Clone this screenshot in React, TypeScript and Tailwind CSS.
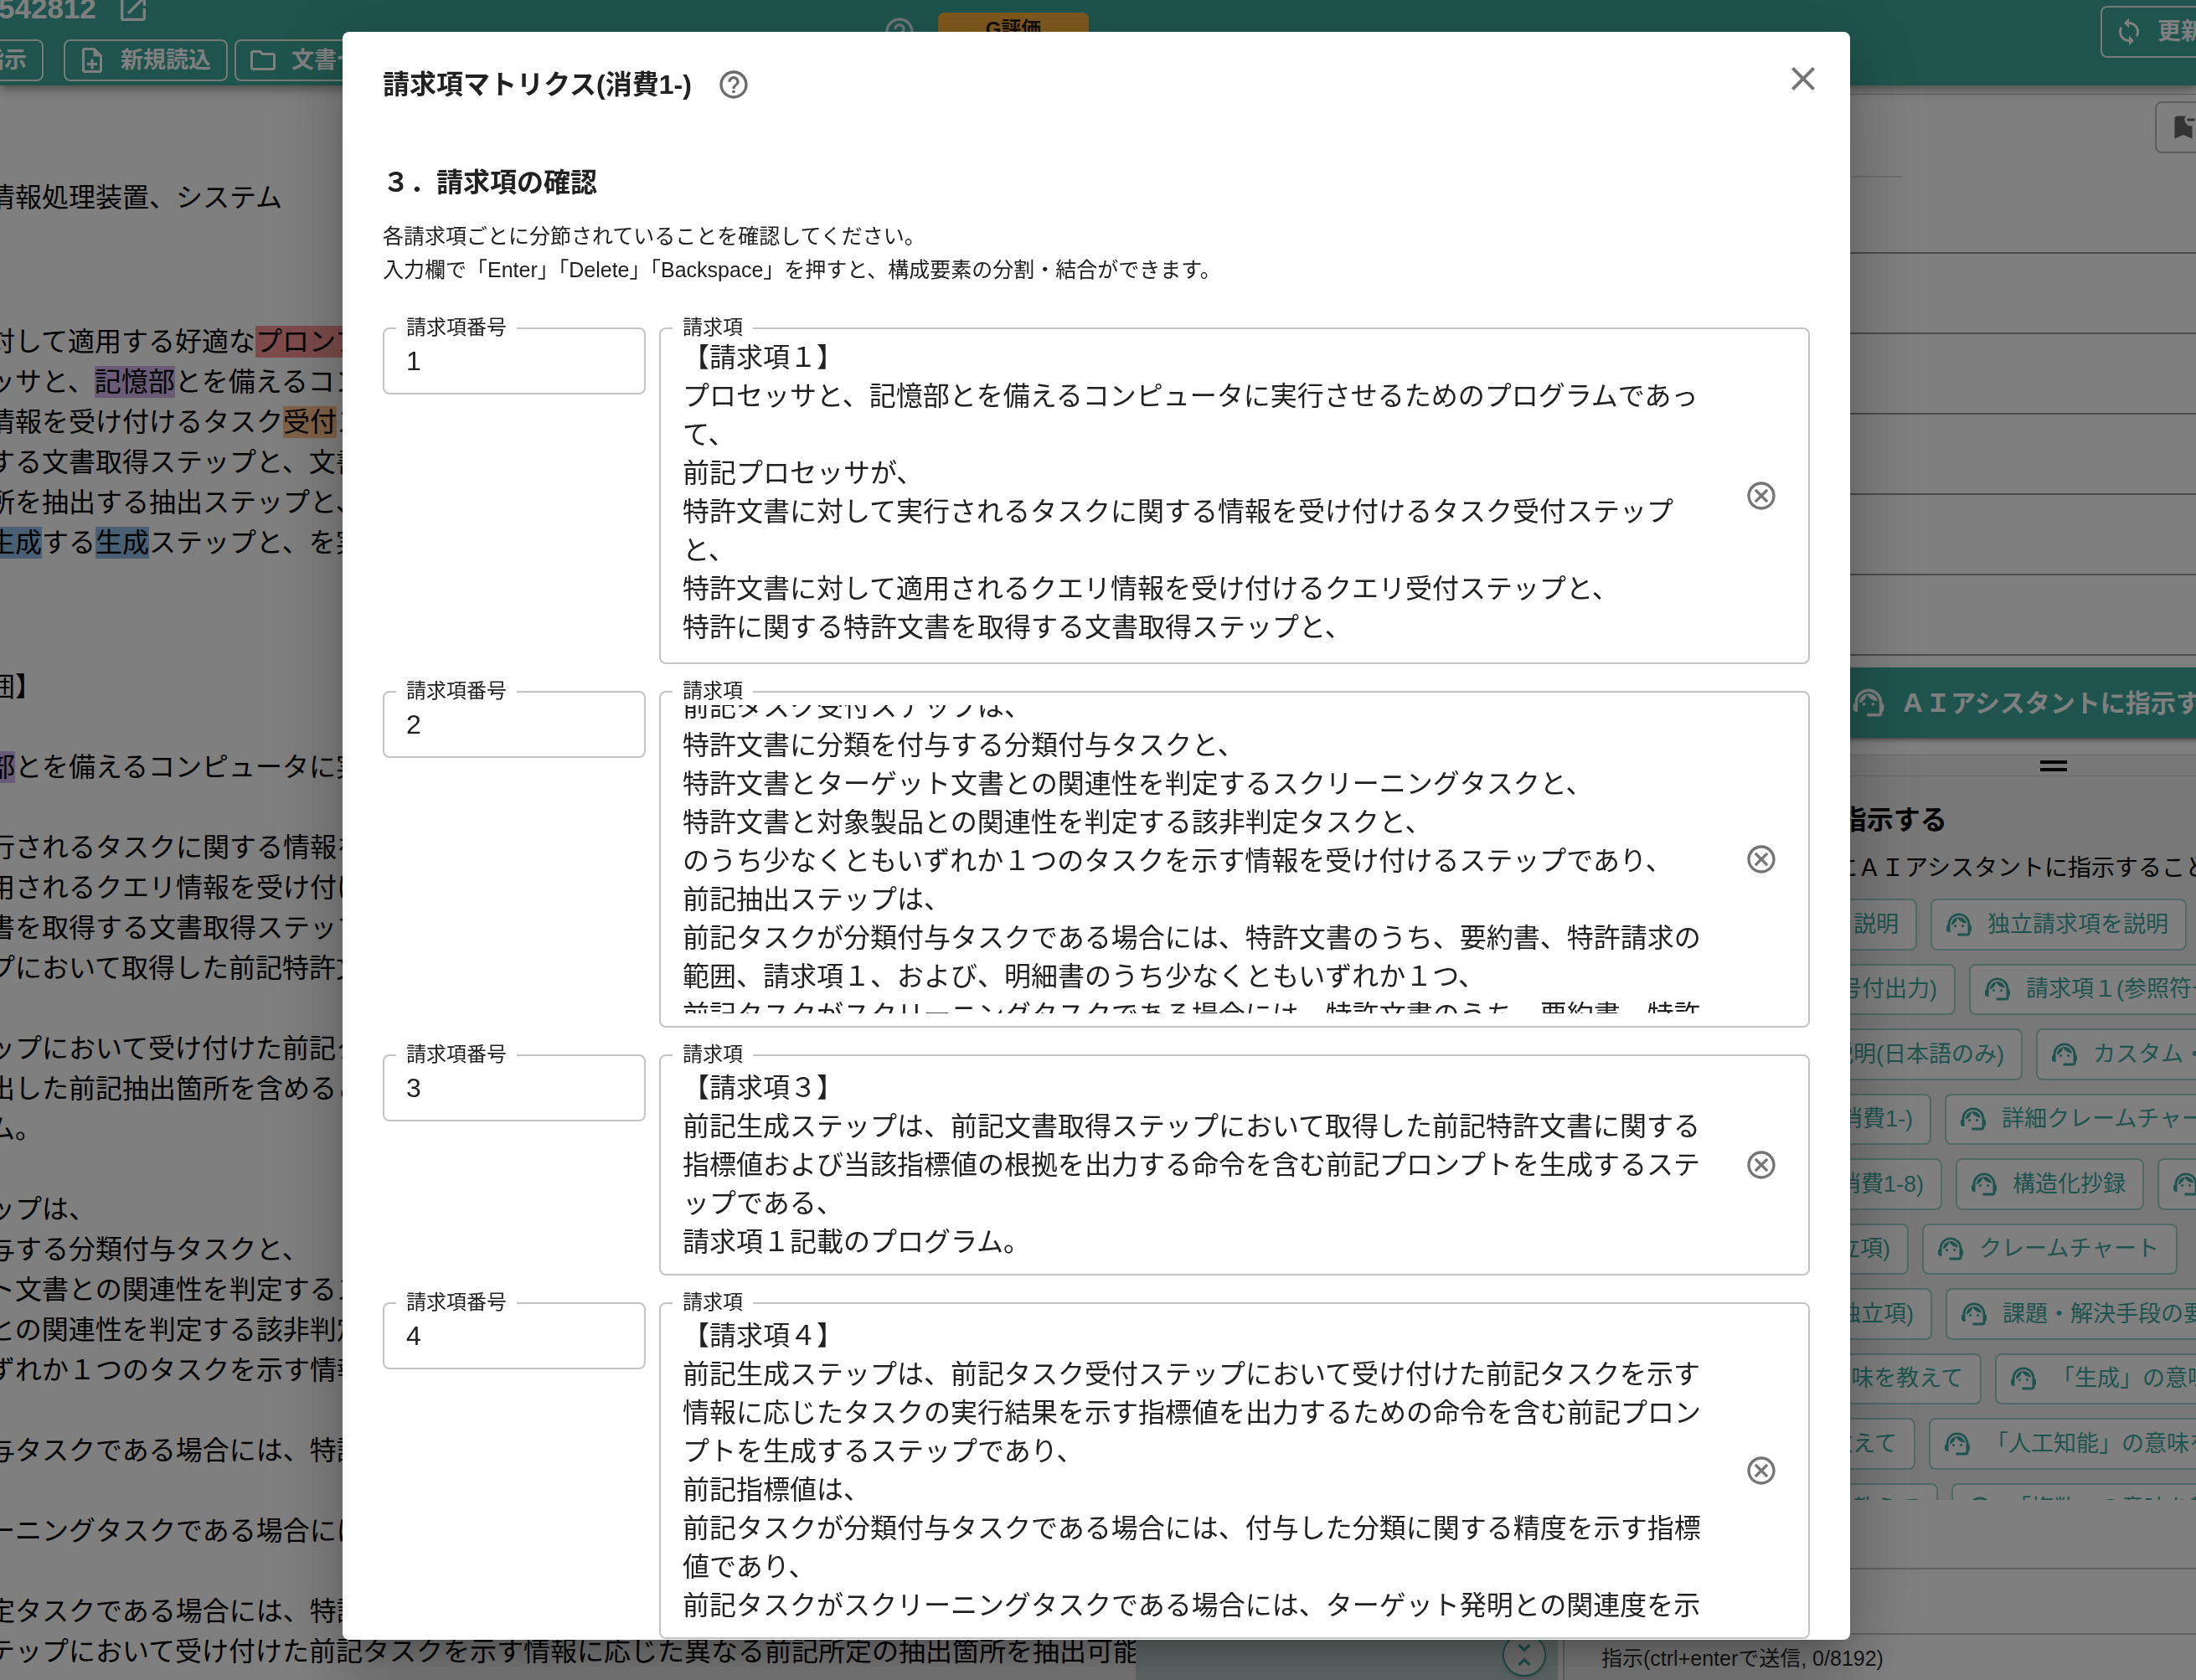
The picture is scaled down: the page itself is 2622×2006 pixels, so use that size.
import { useEffect, useRef } from "react"
import type { ReactNode } from "react"
import {
  MdBookmarkRemove,
  MdClose,
  MdHelpOutline,
  MdLoop,
  MdOpenInNew,
  MdOutlineCancel,
  MdOutlineFolder,
  MdOutlineNoteAdd,
  MdSupportAgent,
  MdUnfoldLess,
} from "react-icons/md"

type Claim = { no: string; rows: number; scroll: number; text: string }

const claims: Claim[] = [
  {
    no: "1",
    rows: 8,
    scroll: 4,
    text: `【請求項１】
プロセッサと、記憶部とを備えるコンピュータに実行させるためのプログラムであって、
前記プロセッサが、
特許文書に対して実行されるタスクに関する情報を受け付けるタスク受付ステップと、
特許文書に対して適用されるクエリ情報を受け付けるクエリ受付ステップと、
特許に関する特許文書を取得する文書取得ステップと、

を実行させるプログラム。`,
  },
  {
    no: "2",
    rows: 8,
    scroll: 67,
    text: `【請求項２】
前記タスク受付ステップは、
特許文書に分類を付与する分類付与タスクと、
特許文書とターゲット文書との関連性を判定するスクリーニングタスクと、
特許文書と対象製品との関連性を判定する該非判定タスクと、
のうち少なくともいずれか１つのタスクを示す情報を受け付けるステップであり、
前記抽出ステップは、
前記タスクが分類付与タスクである場合には、特許文書のうち、要約書、特許請求の範囲、請求項１、および、明細書のうち少なくともいずれか１つ、
前記タスクがスクリーニングタスクである場合には、特許文書のうち、要約書、特許請求の範囲、請求項１、
請求項１記載のプログラム。`,
  },
  {
    no: "3",
    rows: 5,
    scroll: 0,
    text: `【請求項３】
前記生成ステップは、前記文書取得ステップにおいて取得した前記特許文書に関する指標値および当該指標値の根拠を出力する命令を含む前記プロンプトを生成するステップである、
請求項１記載のプログラム。`,
  },
  {
    no: "4",
    rows: 8,
    scroll: 0,
    text: `【請求項４】
前記生成ステップは、前記タスク受付ステップにおいて受け付けた前記タスクを示す情報に応じたタスクの実行結果を示す指標値を出力するための命令を含む前記プロンプトを生成するステップであり、
前記指標値は、
前記タスクが分類付与タスクである場合には、付与した分類に関する精度を示す指標値であり、
前記タスクがスクリーニングタスクである場合には、ターゲット発明との関連度を示す指標値である、
請求項１記載のプログラム。`,
  },
]

const instructions = [
  { lead: "w-[379px]", first: "請求項１を説明", rest: ["独立請求項を説明"] },
  { lead: "w-[425px]", first: "説明(符号付出力)", rest: ["請求項１(参照符号付出力)"] },
  { lead: "w-[505px]", first: "請求項を説明(日本語のみ)", rest: ["カスタム・説明"] },
  { lead: "w-[396px]", first: "マトリクス(消費1-)", rest: ["詳細クレームチャート"] },
  { lead: "w-[409px]", first: "マトリクス(消費1-8)", rest: ["構造化抄録", "要約"] },
  { lead: "w-[369px]", first: "構成要素(独立項)", rest: ["クレームチャート"] },
  { lead: "w-[397px]", first: "構成要素(独立項)", rest: ["課題・解決手段の要約"] },
  { lead: "w-[456px]", first: "「記憶部」の意味を教えて", rest: ["「生成」の意味を教えて"] },
  { lead: "w-[377px]", first: "の意味を教えて", rest: ["「人工知能」の意味を教えて"] },
  { lead: "w-[404px]", first: "の意味を教えて", rest: ["「複数」の意味を教えて"] },
]

function Mark({ className, children }: { className: string; children: ReactNode }) {
  return <mark className={`inline-block leading-[38px] text-black ${className}`}>{children}</mark>
}

function HeaderButton({ icon, children }: { icon?: ReactNode; children: ReactNode }) {
  return (
    <button className="flex h-[50px] shrink-0 items-center gap-4 rounded-lg border-2 border-white/90 pl-3.5 pr-[18px] text-[27px] font-bold">
      {icon}
      {children}
    </button>
  )
}

function Header() {
  return (
    <header className="relative z-10 flex h-[102px] shrink-0 items-start bg-[#3da99b] text-white whitespace-nowrap shadow-[0_4px_8px_-2px_rgba(0,0,0,0.2),0_8px_10px_rgba(0,0,0,0.14),0_2px_20px_rgba(0,0,0,0.12)]">
      <div className="w-[1054px]">
        <div className="-ml-0.5 flex h-5 items-center gap-6">
          <h1 className="text-[35px] leading-5 font-bold">542812</h1>
          <a href="#open" aria-label="開く">
            <MdOpenInNew className="size-10" />
          </a>
        </div>
        <div className="-ml-11 mt-[27px] flex">
          <HeaderButton>
            <span className="ml-1.5">指示</span>
          </HeaderButton>
          <div className="ml-6 flex gap-2">
            <HeaderButton icon={<MdOutlineNoteAdd className="size-9" />}>新規読込</HeaderButton>
            <HeaderButton icon={<MdOutlineFolder className="size-9" />}>文書セット</HeaderButton>
          </div>
        </div>
      </div>
      <MdHelpOutline className="mt-[18px] size-10 text-white/80" />
      <button className="mt-[15px] ml-[26px] h-10 w-[180px] rounded-lg bg-[#ffb53d] text-2xl font-bold text-black/85 shadow-md">
        G評価
      </button>
      <div className="ml-auto w-[114px] pt-[7px]">
        <button className="flex h-[62px] items-center gap-4 rounded-lg border-2 border-white/90 px-3.5 text-[28px] font-bold">
          <MdLoop className="size-9" />
          更新
        </button>
      </div>
    </header>
  )
}

function PatentDocument() {
  return (
    <article className="-ml-[14px] min-w-0 flex-1 overflow-hidden pt-[110px] text-[32px] leading-[48px] whitespace-nowrap text-black">
      <p>情報処理装置、システム</p>
      <div className="mt-[124px]">
        <p>対して適用する好適な<Mark className="bg-[#fa9696]">プロンプト</Mark></p>
        <p>ッサと、<Mark className="bg-[#d4b6f0]">記憶部</Mark>とを備えるコンピュータ</p>
        <p>情報を受け付けるタスク<Mark className="bg-[#ffc490]">受付</Mark>ステップ</p>
        <p>する文書取得ステップと、文書取得</p>
        <p>所を抽出する抽出ステップと、</p>
        <p><Mark className="bg-[#90bfe8]">生成</Mark>する<Mark className="bg-[#90bfe8]">生成</Mark>ステップと、を実行</p>
      </div>
      <h2 className="mt-[124px]">囲】</h2>
      <p className="mt-12"><Mark className="bg-[#d4b6f0]">部</Mark>とを備えるコンピュータに実行</p>
      <div className="mt-12">
        <p>行されるタスクに関する情報を受け</p>
        <p>用されるクエリ情報を受け付ける</p>
        <p>書を取得する文書取得ステップと</p>
        <p>プにおいて取得した前記特許文書</p>
      </div>
      <div className="mt-12">
        <p>ップにおいて受け付けた前記クエリ</p>
        <p>出した前記抽出箇所を含めること</p>
        <p>ム。</p>
      </div>
      <div className="mt-12">
        <p>ップは、</p>
        <p>与する分類付与タスクと、</p>
        <p>ト文書との関連性を判定するスク</p>
        <p>との関連性を判定する該非判定</p>
        <p>ずれか１つのタスクを示す情報を</p>
      </div>
      <p className="mt-12">与タスクである場合には、特許文書</p>
      <p className="mt-12">ーニングタスクである場合には、</p>
      <div className="mt-12">
        <p>定タスクである場合には、特許文書</p>
        <p>テップにおいて受け付けた前記タスクを示す情報に応じた異なる前記所定の抽出箇所を抽出可能</p>
      </div>
    </article>
  )
}

function Chip({ className = "", children }: { className?: string; children: ReactNode }) {
  return (
    <button
      className={`flex shrink-0 items-center justify-end gap-4 overflow-hidden rounded-lg border-2 border-[#9ed4cd] bg-white pl-3.5 pr-5 text-[27px] text-[#3da99b] ${className}`}
    >
      <MdSupportAgent className="size-9 shrink-0" />
      {children}
    </button>
  )
}

function AssistantPanel() {
  return (
    <aside className="w-[756px] shrink-0 overflow-hidden border-l-2 border-[#c8c8c8]">
      <div className="flex h-full w-[1168px] flex-col whitespace-nowrap">
        <div className="mt-2.5 h-[98px] border-t border-[#bdbdbd]">
          <button
            aria-label="ブックマーク"
            className="mt-2 ml-[705px] flex h-[62px] w-24 items-center rounded-lg border-2 border-[#bdbdbd] pl-3.5 text-[#666]"
          >
            <MdBookmarkRemove className="size-9" />
          </button>
        </div>
        <div className="w-[403px] border-t-2 border-[#dcdcdc]" />
        <div className="h-[91px] border-b-2 border-[#969696]" />
        <div className="h-24 border-b-2 border-[#969696]" />
        <div className="h-24 border-b-2 border-[#969696]" />
        <div className="h-24 border-b-2 border-[#969696]" />
        <div className="h-24 border-b-2 border-[#969696]" />
        <div className="h-24 border-b-2 border-[#969696]" />
        <button className="mx-4 mt-3.5 flex h-[84px] shrink-0 items-center gap-4 rounded-lg bg-[#3da99b] pl-[325px] text-[30px] font-bold text-white shadow-[0_6px_2px_-4px_rgba(0,0,0,0.2),0_4px_4px_rgba(0,0,0,0.14),0_2px_10px_rgba(0,0,0,0.12)]">
          <MdSupportAgent className="size-11" />
          ＡＩアシスタントに指示する
        </button>
        <div className="mt-5 flex h-[26px] shrink-0 flex-col items-center justify-center gap-[5px] border-y border-[#cfcfcf] bg-[#f0f0f0]">
          <div className="h-1 w-8 bg-black" />
          <div className="h-1 w-8 bg-black" />
        </div>
        <div className="h-[864px] shrink-0 overflow-hidden bg-[#f0f0f0] pt-7 pl-[42px]">
          <h2 className="text-[32px] leading-[48px] font-bold text-black">ＡＩアシスタントに指示する</h2>
          <p className="mt-3.5 text-[28px] leading-10 text-black">
            以下のボタンから簡単にＡＩアシスタントに指示することができます。
          </p>
          <div className="mt-4 grid h-[759px] grid-rows-10 gap-4">
            {instructions.map((row, i) => (
              <div key={i} className="flex gap-4">
                <Chip className={row.lead}>{row.first}</Chip>
                {row.rest.map((label) => (
                  <Chip key={label}>{label}</Chip>
                ))}
              </div>
            ))}
          </div>
        </div>
        <div className="mt-[81px] h-20 shrink-0 border-y-2 border-[#c4c4c4]" />
        <p className="mt-2 pl-11 text-[25px] leading-10 text-black/85">指示(ctrl+enterで送信, 0/8192)</p>
      </div>
    </aside>
  )
}

function ClaimRow({ claim }: { claim: Claim }) {
  const ref = useRef<HTMLTextAreaElement>(null)

  useEffect(() => {
    if (ref.current) ref.current.scrollTop = claim.scroll
  }, [claim.scroll])

  return (
    <div className="flex items-start gap-4">
      <div className="relative w-[314px] shrink-0 rounded-lg border-2 border-[#c4c4c4]">
        <label htmlFor={`no-${claim.no}`} className="absolute -top-3.5 left-3.5 bg-white px-3 text-2xl leading-6">
          請求項番号
        </label>
        <input
          id={`no-${claim.no}`}
          defaultValue={claim.no}
          className="block h-[76px] w-full bg-transparent px-[26px] text-[32px] outline-none"
        />
      </div>
      <div className="relative flex min-w-0 flex-1 items-center gap-8 rounded-lg border-2 border-[#c4c4c4] py-[15px] pr-9 pl-[26px]">
        <label htmlFor={`claim-${claim.no}`} className="absolute -top-3.5 left-3.5 z-10 bg-white px-3 text-2xl leading-6">
          請求項
        </label>
        <textarea
          id={`claim-${claim.no}`}
          ref={ref}
          rows={claim.rows}
          defaultValue={claim.text}
          className="block min-w-0 flex-1 resize-none bg-transparent text-[32px] leading-[46px] outline-none [line-break:loose] [scrollbar-width:none]"
        />
        <button aria-label="削除" className="text-[#757575]">
          <MdOutlineCancel className="size-10" />
        </button>
      </div>
    </div>
  )
}

function ClaimDialog() {
  return (
    <div className="fixed inset-0 z-20 flex justify-center bg-black/50 pt-[38px] pr-1 pb-12">
      <div
        role="dialog"
        aria-labelledby="dialog-title"
        className="flex h-full w-[1800px] max-w-full flex-col rounded-lg bg-white px-12 text-[#212121] shadow-[0_22px_30px_-14px_rgba(0,0,0,0.2),0_48px_76px_6px_rgba(0,0,0,0.14),0_18px_92px_16px_rgba(0,0,0,0.12)]"
      >
        <div className="flex shrink-0 items-start justify-between pt-8">
          <div className="flex h-[62px] items-center gap-[30px]">
            <h2 id="dialog-title" className="text-[32px] font-bold">
              請求項マトリクス(消費1-)
            </h2>
            <MdHelpOutline className="size-10 text-[#6b6b6b]" />
          </div>
          <button aria-label="閉じる" className="-mr-4 text-[#757575]">
            <MdClose className="size-12" />
          </button>
        </div>
        <div className="min-h-0 flex-1 overflow-y-auto pt-[62px] [scrollbar-width:none]">
          <h3 className="text-[32px] leading-[48px] font-bold">３．請求項の確認</h3>
          <p className="mt-5 text-[25px] leading-10">
            各請求項ごとに分節されていることを確認してください。
            <br />
            入力欄で「Enter」「Delete」「Backspace」を押すと、構成要素の分割・結合ができます。
          </p>
          <div className="mt-[49px] flex flex-col gap-8">
            {claims.map((claim) => (
              <ClaimRow key={claim.no} claim={claim} />
            ))}
          </div>
        </div>
      </div>
    </div>
  )
}

export default function App() {
  return (
    <div
      lang="ja"
      className="flex h-screen flex-col overflow-hidden bg-white font-['Liberation_Sans','Noto_Sans_CJK_JP',sans-serif]"
    >
      <Header />
      <main className="flex min-h-0 flex-1">
        <PatentDocument />
        <div className="mr-1.5 flex w-[504px] shrink-0 flex-col items-end justify-end bg-[#c8dcd9] pr-3.5 pb-1">
          <button
            aria-label="折りたたむ"
            className="flex size-[52px] items-center justify-center rounded-full border-2 border-[#3da99b] bg-[#eeeeee] text-[#3da99b] shadow-md"
          >
            <MdUnfoldLess className="size-10" />
          </button>
        </div>
        <AssistantPanel />
      </main>
      <ClaimDialog />
    </div>
  )
}
